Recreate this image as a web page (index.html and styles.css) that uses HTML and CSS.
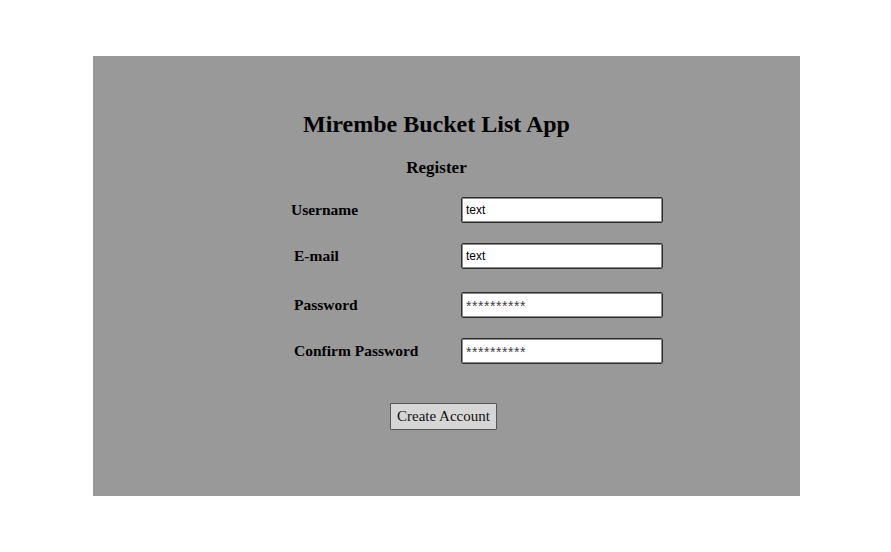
FILE: index.html
```html
<!DOCTYPE html>
<html>
<head>
<meta charset="utf-8">
<link rel="stylesheet" href="styles.css">
</head>
<body>
<div class="panel">
  <div class="form">
    <h1 class="title">Mirembe Bucket List App</h1>
    <h2 class="subtitle">Register</h2>
    <div class="fields">
      <div class="label label-first">Username</div>
      <div class="input">text</div>
      <div class="label row-2">E-mail</div>
      <div class="input row-2">text</div>
      <div class="label row-3">Password</div>
      <div class="input input-pw row-3">**********</div>
      <div class="label row-4">Confirm Password</div>
      <div class="input input-pw row-4">**********</div>
    </div>
    <div class="actions">
      <button class="btn">Create Account</button>
    </div>
  </div>
</div>
</body>
</html>
```
FILE: styles.css
```css
html, body {
  margin: 0;
  padding: 0;
  background: #ffffff;
}
body {
  font-family: "Liberation Serif", "Times New Roman", serif;
  color: #000;
}
.panel {
  margin: 56px 0 0 93px;
  width: 707px;
  height: 440px;
  background: #999999;
  box-sizing: border-box;
  padding: 54px 0 0 198px;
}
.form {
  width: 372px;
}
.title {
  width: 291px;
  margin: 0;
  text-align: center;
  font-size: 24px;
  line-height: 28px;
  font-weight: bold;
}
.subtitle {
  width: 291px;
  margin: 20px 0 0 0;
  text-align: center;
  font-size: 17px;
  line-height: 20px;
  font-weight: bold;
}
.fields {
  margin-top: 19px;
  display: grid;
  grid-template-columns: 170px 202px;
  align-items: center;
}
.row-2 { margin-top: 20px; }
.row-3 { margin-top: 23px; }
.row-4 { margin-top: 20px; }
.label {
  font-size: 15.5px;
  font-weight: bold;
  padding-left: 3px;
}
.label-first {
  padding-left: 0;
}
.input {
  height: 26px;
  box-sizing: border-box;
  border: 1px solid #2e2e2e;
  border-radius: 2px;
  background: #fff;
  font-family: "Liberation Sans", Arial, sans-serif;
  font-size: 12px;
  line-height: 24px;
  padding-left: 4px;
  box-shadow: inset 0 0 0 1px #8a8a8a;
}
.input-pw {
  color: #404040;
  font-size: 14px;
  letter-spacing: 0.55px;
  padding-top: 3px;
  line-height: 20px;
}
.actions {
  margin-top: 39px;
  width: 305px;
  display: flex;
  justify-content: center;
}
.btn {
  font-family: "Liberation Serif", "Times New Roman", serif;
  font-size: 15px;
  height: 27px;
  padding: 0 6px;
  background: #d6d6d6;
  border: 1.5px solid #555;
  border-radius: 1px;
  color: #111;
}
```
